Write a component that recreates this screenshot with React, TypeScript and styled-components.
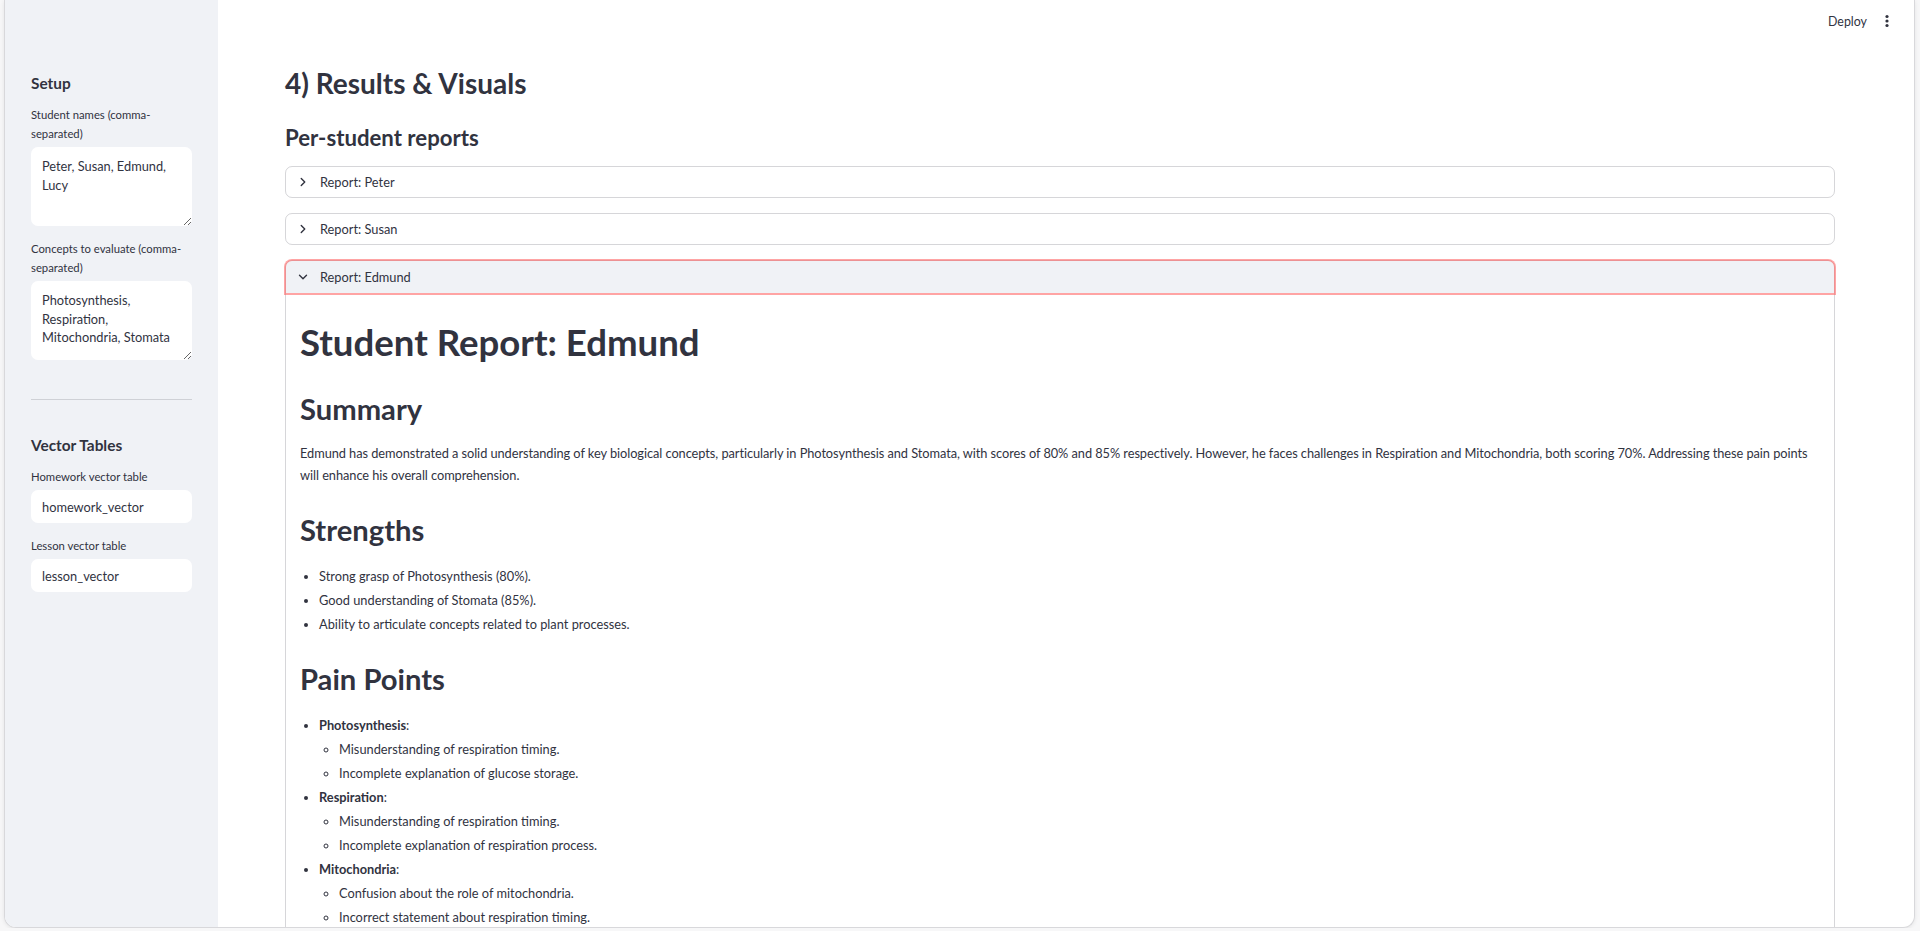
import styled, { createGlobalStyle, css } from "styled-components";
import { ChevronRight, ChevronDown } from "lucide-react";

const GlobalStyle = createGlobalStyle`
  html, body {
    margin: 0;
    padding: 0;
    background: #f7f7f8;
    overflow: hidden;
  }
  body {
    font-family: Lato, "Noto Sans", sans-serif;
    color: #31333f;
  }
  * {
    box-sizing: border-box;
  }
`;

const Window = styled.div`
  margin: 0 5px 0 4px;
  height: 928px;
  display: flex;
  background: #fff;
  border: 1px solid #d8d8db;
  border-top: none;
  border-radius: 0 0 12px 12px;
  box-shadow: 0 1px 4px rgba(0, 0, 0, 0.08);
  overflow: hidden;
`;

const Sidebar = styled.aside`
  width: 213px;
  flex-shrink: 0;
  background: #f0f2f6;
  padding: 72px 26px 0 26px;
`;

const SideHeading = styled.h2<{ $gap?: number }>`
  margin: ${(p) => p.$gap ?? 0}px 0 0;
  font-size: 15.4px;
  line-height: 22px;
  font-weight: 700;
`;

const Field = styled.div<{ $first?: boolean }>`
  margin-top: ${(p) => (p.$first ? 11 : 13)}px;
`;

const Label = styled.label`
  display: block;
  font-size: 11.3px;
  line-height: 19px;
  margin-bottom: 4px;
`;

const TextArea = styled.textarea`
  display: block;
  width: 100%;
  height: 79px;
  resize: vertical;
  border: none;
  border-radius: 7px;
  background: #fff;
  padding: 10px 11px;
  font-family: inherit;
  font-size: 12.8px;
  line-height: 18.5px;
  color: #31333f;
  outline: none;
`;

const TextInput = styled.input`
  display: block;
  width: 100%;
  height: 33px;
  border: none;
  border-radius: 7px;
  background: #fff;
  padding: 0 11px;
  font-family: inherit;
  font-size: 12.8px;
  color: #31333f;
  outline: none;
`;

const Divider = styled.hr`
  margin: 39px 0 0;
  border: none;
  border-top: 1px solid #cfd1d6;
`;

const Main = styled.main`
  flex: 1;
  display: flex;
  flex-direction: column;
  min-width: 0;
`;

const TopBar = styled.header`
  flex-shrink: 0;
  height: 42px;
  display: flex;
  align-items: center;
  justify-content: flex-end;
  gap: 12px;
  padding-right: 19px;
  font-size: 12.4px;
`;

const Content = styled.div`
  flex-shrink: 0;
  padding: 24px 79px 0 67px;
`;

const PageHeader = styled.h2`
  margin: 0;
  font-size: 28px;
  line-height: 34px;
  font-weight: 700;
`;

const SubHeader = styled.h3`
  margin: 24px 0 0;
  font-size: 22.2px;
  line-height: 27px;
  font-weight: 700;
`;

const ExpanderList = styled.div`
  margin-top: 15px;
  display: flex;
  flex-direction: column;
  gap: 15px;
`;

const ExpanderBox = styled.div`
  border: 1px solid rgba(49, 51, 63, 0.2);
  border-radius: 7px;
`;

const ExpanderHeader = styled.div<{ $active?: boolean }>`
  display: flex;
  align-items: center;
  gap: 10px;
  height: 30px;
  padding-left: 10px;
  font-size: 12.8px;
  color: #31333f;
  ${(p) =>
    p.$active &&
    css`
      height: 32px;
      background: #f0f2f6;
      border-radius: 6px 6px 0 0;
      box-shadow: 0 0 0 2px rgba(255, 90, 90, 0.55);
    `}
`;

const ExpanderBody = styled.div`
  padding: 0 14px 40px;
`;

const ReportTitle = styled.h1`
  margin: 27px 0 0;
  font-size: 36.6px;
  line-height: 45px;
  font-weight: 700;
`;

const SectionTitle = styled.h2`
  margin: 26px 0 0;
  font-size: 29.2px;
  line-height: 36px;
  font-weight: 700;
`;

const Paragraph = styled.p`
  margin: 15px 0 0;
  font-size: 12.8px;
  line-height: 22px;
  letter-spacing: -0.06px;
`;

const List = styled.ul<{ $nested?: boolean }>`
  margin: ${(p) => (p.$nested ? "2px 0 0" : "17px 0 0")};
  padding-left: ${(p) => (p.$nested ? 20 : 19)}px;
  list-style: ${(p) => (p.$nested ? "circle" : "disc")};
  font-size: 12.8px;
  line-height: 22px;
`;

const Item = styled.li`
  & + & {
    margin-top: 2px;
  }
`;

const Kebab = () => (
  <svg width="16" height="16" viewBox="0 0 16 16" fill="#31333f">
    <circle cx="8" cy="3.5" r="1.6" />
    <circle cx="8" cy="8" r="1.6" />
    <circle cx="8" cy="12.5" r="1.6" />
  </svg>
);

interface ExpanderProps {
  title: string;
  open?: boolean;
  children?: React.ReactNode;
}

const Expander = ({ title, open, children }: ExpanderProps) => (
  <ExpanderBox>
    <ExpanderHeader $active={open}>
      {open ? <ChevronDown size={14} strokeWidth={2.4} /> : <ChevronRight size={14} strokeWidth={2.4} />}
      <span>Report: {title}</span>
    </ExpanderHeader>
    {open && <ExpanderBody>{children}</ExpanderBody>}
  </ExpanderBox>
);

const painPoints = [
  {
    concept: "Photosynthesis",
    notes: ["Misunderstanding of respiration timing.", "Incomplete explanation of glucose storage."],
  },
  {
    concept: "Respiration",
    notes: ["Misunderstanding of respiration timing.", "Incomplete explanation of respiration process."],
  },
  {
    concept: "Mitochondria",
    notes: ["Confusion about the role of mitochondria.", "Incorrect statement about respiration timing."],
  },
];

const App = () => (
  <>
    <GlobalStyle />
    <Window>
      <Sidebar>
        <SideHeading>Setup</SideHeading>
        <Field $first>
          <Label>Student names (comma-separated)</Label>
          <TextArea defaultValue="Peter, Susan, Edmund, Lucy" />
        </Field>
        <Field>
          <Label>Concepts to evaluate (comma-separated)</Label>
          <TextArea defaultValue="Photosynthesis, Respiration, Mitochondria, Stomata" />
        </Field>
        <Divider />
        <SideHeading $gap={34}>Vector Tables</SideHeading>
        <Field $first>
          <Label>Homework vector table</Label>
          <TextInput defaultValue="homework_vector" />
        </Field>
        <Field>
          <Label>Lesson vector table</Label>
          <TextInput defaultValue="lesson_vector" />
        </Field>
      </Sidebar>
      <Main>
        <TopBar>
          <span>Deploy</span>
          <Kebab />
        </TopBar>
        <Content>
          <PageHeader>4) Results &amp; Visuals</PageHeader>
          <SubHeader>Per-student reports</SubHeader>
          <ExpanderList>
            <Expander title="Peter" />
            <Expander title="Susan" />
            <Expander title="Edmund" open>
              <ReportTitle>Student Report: Edmund</ReportTitle>
              <SectionTitle>Summary</SectionTitle>
              <Paragraph>
                Edmund has demonstrated a solid understanding of key biological concepts, particularly in
                Photosynthesis and Stomata, with scores of 80% and 85% respectively. However, he faces challenges in
                Respiration and Mitochondria, both scoring 70%. Addressing these pain points will enhance his overall
                comprehension.
              </Paragraph>
              <SectionTitle>Strengths</SectionTitle>
              <List>
                <Item>Strong grasp of Photosynthesis (80%).</Item>
                <Item>Good understanding of Stomata (85%).</Item>
                <Item>Ability to articulate concepts related to plant processes.</Item>
              </List>
              <SectionTitle>Pain Points</SectionTitle>
              <List>
                {painPoints.map((p) => (
                  <Item key={p.concept}>
                    <strong>{p.concept}</strong>:
                    <List $nested>
                      {p.notes.map((n) => (
                        <Item key={n}>{n}</Item>
                      ))}
                    </List>
                  </Item>
                ))}
              </List>
            </Expander>
          </ExpanderList>
        </Content>
      </Main>
    </Window>
  </>
);

export default App;
